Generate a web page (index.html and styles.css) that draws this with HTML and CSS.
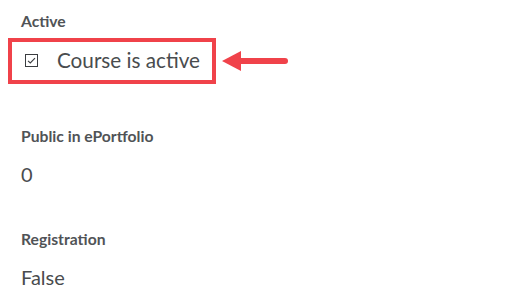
FILE: index.html
```html
<!DOCTYPE html>
<html>
<head>
<meta charset="utf-8">
<link rel="stylesheet" href="styles.css">
</head>
<body>
<div class="page">
  <section class="field field-active">
    <div class="label">Active</div>
    <div class="annotated">
      <div class="highlight">
        <svg class="check" width="13" height="13" viewBox="0 0 13 13">
          <rect x="0.5" y="0.5" width="12" height="12" fill="none" stroke="#3a3d40" stroke-width="1"/>
          <path d="M3 6.8 L5.3 9 L10 4.2" fill="none" stroke="#3a3d40" stroke-width="1.1"/>
        </svg>
        <span class="value box-value">Course is active</span>
      </div>
      <svg class="arrow" width="68" height="22" viewBox="0 0 68 22">
        <path d="M16 8 L63 8 A3 3 0 0 1 63 14 L16 14 Z" fill="#f0424a"/>
        <path d="M0 11 L19 1 L19 21 Z" fill="#f0424a"/>
      </svg>
    </div>
  </section>
  <section class="field">
    <div class="label">Public in ePortfolio</div>
    <div class="value">0</div>
  </section>
  <section class="field">
    <div class="label">Registration</div>
    <div class="value">False</div>
  </section>
</div>
</body>
</html>
```
FILE: styles.css
```css
html, body {
  margin: 0;
  padding: 0;
  background: #ffffff;
}
body {
  font-family: Lato, "Open Sans", sans-serif;
  color: #494c4e;
}
.page {
  padding: 10px 0 0 21px;
  display: flex;
  flex-direction: column;
}
.field {
  display: flex;
  flex-direction: column;
}
.field + .field {
  margin-top: 39px;
}
.field-active {
  margin-bottom: 2px;
}
.label {
  font-size: 15.7px;
  font-weight: 700;
  line-height: 22px;
  color: #505356;
}
.value {
  font-size: 20px;
  line-height: 30px;
  color: #494c4e;
  white-space: nowrap;
}
.field .label + .value {
  margin-top: 12px;
}
.annotated {
  display: flex;
  align-items: center;
  margin-top: 6px;
  margin-left: -13px;
}
.highlight {
  display: flex;
  align-items: center;
  border: 4px solid #f0424a;
  padding: 2px 0 4px 13px;
  box-sizing: border-box;
  width: 208px;
  height: 46px;
}
.check {
  margin-right: 19px;
  flex: none;
}
.box-value {
  font-size: 20.7px;
}
.arrow {
  margin-left: 6px;
  flex: none;
}
```
